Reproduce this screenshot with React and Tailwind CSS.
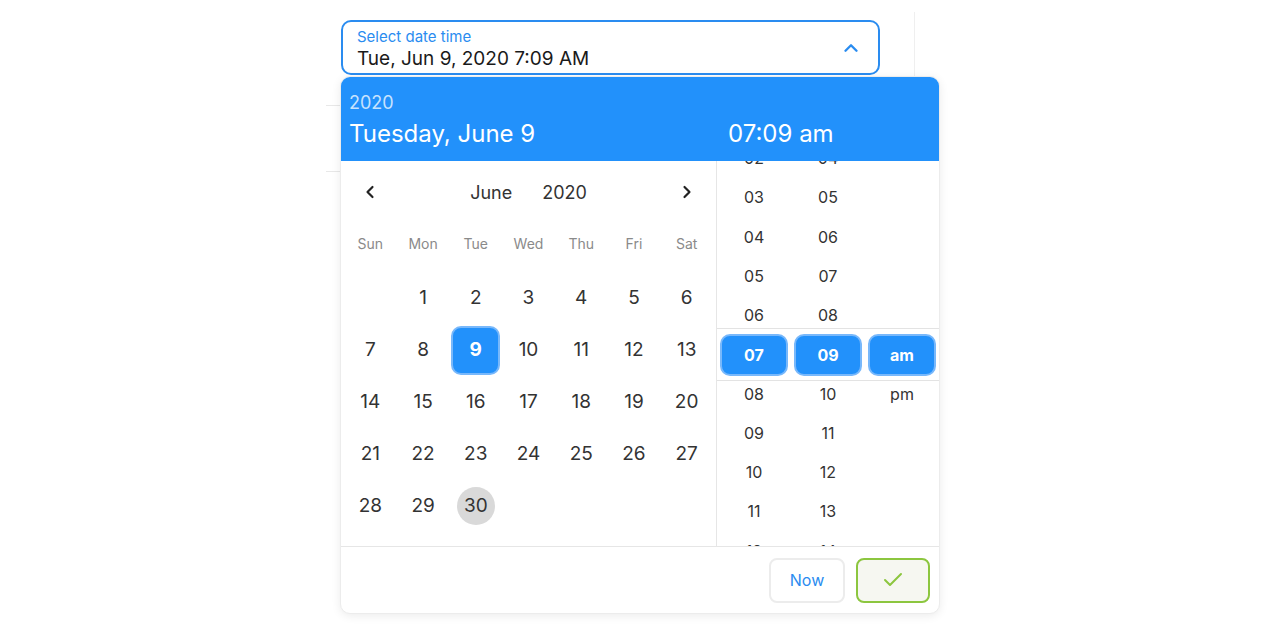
import { ChevronLeft, ChevronRight, ChevronUp, Check } from "lucide-react";

const weekDays = ["Sun", "Mon", "Tue", "Wed", "Thu", "Fri", "Sat"];

const days = [
  null, 1, 2, 3, 4, 5, 6,
  7, 8, 9, 10, 11, 12, 13,
  14, 15, 16, 17, 18, 19, 20,
  21, 22, 23, 24, 25, 26, 27,
  28, 29, 30,
];

const hours = ["02", "03", "04", "05", "06", "07", "08", "09", "10", "11", "12"];
const minutes = ["04", "05", "06", "07", "08", "09", "10", "11", "12", "13", "14"];
const meridiem = ["", "", "", "", "", "am", "pm"];

const TimeColumn = ({ items, selected }) => (
  <div className="flex-1 overflow-hidden">
    <div className="-mt-[22.6px]">
      {items.map((item, i) => (
        <div
          key={i}
          className="relative h-[39.25px] flex items-center justify-center text-[16px] text-[#333]"
        >
          {item === selected ? (
            <div className="absolute left-[3px] right-[3px] top-[-1px] h-[42px] rounded-[10px] bg-[#2291fb] border-2 border-[#78b8fb] flex items-center justify-center font-bold text-white">
              {item}
            </div>
          ) : (
            item
          )}
        </div>
      ))}
    </div>
  </div>
);

const DateTimePicker = () => {
  return (
    <div className="absolute left-[14px] top-[64px] w-[600px] h-[538px] bg-white rounded-[10px] border border-[#ececec] shadow-[0_2px_10px_rgba(0,0,0,0.08)] flex flex-col overflow-hidden">
      <div className="h-[84px] bg-[#2291fb] flex text-white">
        <div className="w-[377px] pl-[8px] pt-[14px]">
          <div className="text-[18px] leading-[24px] text-white/75">2020</div>
          <div className="text-[24px] leading-[34px] mt-[2px]">Tuesday, June 9</div>
        </div>
        <div className="pl-[10px] pt-[40px]">
          <div className="text-[24px] leading-[34px]">07:09 am</div>
        </div>
      </div>

      <div className="flex flex-1 min-h-0">
        <div className="w-[376px] px-[3px] border-r border-[#e6e6e6]">
          <div className="h-[62px] flex items-center justify-between">
            <div className="w-[52.7px] flex justify-center">
              <ChevronLeft className="w-5 h-5 text-[#222]" strokeWidth={2.6} />
            </div>
            <div className="flex gap-[30px] text-[18px] text-[#333]">
              <span>June</span>
              <span>2020</span>
            </div>
            <div className="w-[52.7px] flex justify-center">
              <ChevronRight className="w-5 h-5 text-[#222]" strokeWidth={2.6} />
            </div>
          </div>
          <div className="h-[40px] grid grid-cols-7 items-center">
            {weekDays.map((d) => (
              <div key={d} className="text-center text-[14px] text-[#8a8a8a]">
                {d}
              </div>
            ))}
          </div>
          <div className="mt-[9px] grid grid-cols-7">
            {days.map((d, i) => (
              <div key={i} className="h-[52px] flex items-center justify-center">
                {d === 9 ? (
                  <div className="w-[49px] h-[49px] rounded-[10px] bg-[#2291fb] border-2 border-[#78b8fb] flex items-center justify-center text-white font-bold text-[19px]">
                    9
                  </div>
                ) : d === 30 ? (
                  <div className="w-[38px] h-[38px] rounded-full bg-[#d9d9d9] flex items-center justify-center text-[19px] text-[#333]">
                    30
                  </div>
                ) : (
                  <span className="text-[19px] text-[#333]">{d}</span>
                )}
              </div>
            ))}
          </div>
        </div>

        <div className="relative flex-1 flex">
          <div className="absolute left-0 right-0 top-[167px] h-[53px] border-y border-[#e3e3e3]" />
          <TimeColumn items={hours} selected="07" />
          <TimeColumn items={minutes} selected="09" />
          <TimeColumn items={meridiem} selected="am" />
        </div>
      </div>

      <div className="h-[67px] border-t border-[#e6e6e6] flex items-center justify-end gap-[11px] pr-[9px]">
        <button className="w-[76px] h-[45px] rounded-[8px] border-2 border-[#ececec] bg-white text-[16px] text-[#2a8cf0]">
          Now
        </button>
        <button className="w-[74px] h-[45px] rounded-[8px] border-2 border-[#8cc63f] bg-[#f6f7f1] flex items-center justify-center">
          <Check className="w-[24px] h-[24px] text-[#8cc63f]" strokeWidth={2} />
        </button>
      </div>
    </div>
  );
};

export default function App() {
  return (
    <div className="w-[1280px] h-[640px] bg-white overflow-hidden font-['Inter','Noto_Sans',sans-serif]">
      <div className="relative ml-[326px] mt-[12px] w-[589px] h-[200px] border-r border-[#efefef]">
        <div className="h-[94px] border-b border-[#e8e8e8] pt-[8px] pl-[15px]">
          <div className="w-[539px] h-[55px] rounded-[10px] border-2 border-[#2a8cf0] bg-white flex items-center justify-between pl-[14px] pr-[16px]">
            <div className="flex flex-col pt-[4px]">
              <span className="text-[15px] leading-[18px] text-[#2a8cf0]">Select date time</span>
              <span className="text-[19px] leading-[25px] text-[#1a1a1a]">
                Tue, Jun 9, 2020 7:09 AM
              </span>
            </div>
            <ChevronUp className="w-[22px] h-[22px] text-[#2a8cf0]" strokeWidth={2.6} />
          </div>
        </div>
        <div className="h-[66px] border-b border-[#e8e8e8]" />
        <DateTimePicker />
      </div>
    </div>
  );
}
